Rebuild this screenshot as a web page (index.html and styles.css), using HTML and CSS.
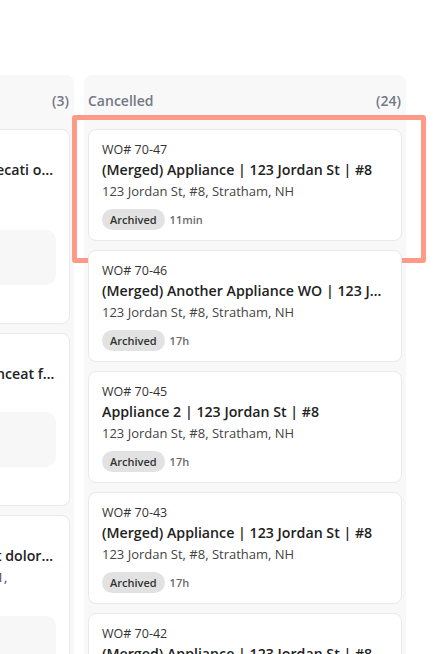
FILE: index.html
```html
<!DOCTYPE html>
<html lang="en">
<head>
<meta charset="utf-8">
<title>Work orders</title>
<link rel="stylesheet" href="styles.css">
</head>
<body>
<div class="board">
  <section class="column">
    <header class="col-head"><span class="col-name">Completed</span><span class="col-count">(3)</span></header>
    <article class="card">
      <div class="wo">WO# 70-12</div>
      <div class="title">Nam libero et excepturi sint occaecati omnis</div>
      <div class="addr">77 Lorem Ipsum Street, Suite 300, Northwoodsborough, NH</div>
      <div class="preview"></div>
      <div class="meta"><span class="badge">Completed</span><span class="time">2d</span></div>
    </article>
    <article class="card">
      <div class="wo">WO# 70-09</div>
      <div class="title">Quis autem vel eum irure quis conceat fugiat</div>
      <div class="addr">12 Oak Ave, #3, Exeter, NH</div>
      <div class="preview"></div>
      <div class="meta"><span class="badge">Completed</span><span class="time">3d</span></div>
    </article>
    <article class="card">
      <div class="wo">WO# 70-03</div>
      <div class="title">Sed ut perspiciatis unde omnes et doloremque laudantium</div>
      <div class="addr">4560 Lorem Ipsum Boulevard, Suite 21, Concord, NH</div>
      <div class="preview"></div>
      <div class="meta"><span class="badge">Completed</span><span class="time">5d</span></div>
    </article>
  </section>
  <section class="column">
    <header class="col-head"><span class="col-name">Cancelled</span><span class="col-count">(24)</span></header>
    <article class="card">
      <div class="wo">WO# 70-47</div>
      <div class="title">(Merged) Appliance | 123 Jordan St | #8</div>
      <div class="addr">123 Jordan St, #8, Stratham, NH</div>
      <div class="meta"><span class="badge">Archived</span><span class="time">11min</span></div>
      <div class="highlight"></div>
    </article>
    <article class="card">
      <div class="wo">WO# 70-46</div>
      <div class="title">(Merged) Another Appliance WO | 123 Jordan St | #8</div>
      <div class="addr">123 Jordan St, #8, Stratham, NH</div>
      <div class="meta"><span class="badge">Archived</span><span class="time">17h</span></div>
    </article>
    <article class="card">
      <div class="wo">WO# 70-45</div>
      <div class="title">Appliance 2 | 123 Jordan St | #8</div>
      <div class="addr">123 Jordan St, #8, Stratham, NH</div>
      <div class="meta"><span class="badge">Archived</span><span class="time">17h</span></div>
    </article>
    <article class="card">
      <div class="wo">WO# 70-43</div>
      <div class="title">(Merged) Appliance | 123 Jordan St | #8</div>
      <div class="addr">123 Jordan St, #8, Stratham, NH</div>
      <div class="meta"><span class="badge">Archived</span><span class="time">17h</span></div>
    </article>
    <article class="card">
      <div class="wo">WO# 70-42</div>
      <div class="title">(Merged) Appliance | 123 Jordan St | #8</div>
      <div class="addr">123 Jordan St, #8, Stratham, NH</div>
      <div class="meta"><span class="badge">Archived</span><span class="time">17h</span></div>
    </article>
  </section>
</div>
</body>
</html>
```
FILE: styles.css
```css
html, body {
  margin: 0;
  background: #ffffff;
}

body {
  font-family: "Open Sans", "Noto Sans", sans-serif;
  color: #222;
  overflow: hidden;
}

.board {
  display: flex;
  align-items: flex-start;
  gap: 10px;
  padding-top: 75px;
  margin-left: -248px;
}

.column {
  flex: 0 0 322px;
  width: 322px;
  min-width: 0;
  box-sizing: border-box;
  background: #f8f8f8;
  border-radius: 8px;
  padding: 0 4px 4px;
  display: flex;
  flex-direction: column;
  gap: 9px;
}

.col-head {
  display: flex;
  justify-content: space-between;
  align-items: center;
  padding: 16px 1px 0 0;
  height: 20px;
  margin-bottom: 9px;
  font-size: 14px;
  font-weight: 600;
  line-height: 20px;
  color: #737987;
}

.card {
  position: relative;
  min-width: 0;
  background: #ffffff;
  border: 1px solid #e9e9e9;
  border-radius: 8px;
  padding: 10px 13px 10px;
}

.wo {
  font-size: 12.5px;
  line-height: 19px;
  color: #333;
}

.title {
  font-size: 14.2px;
  font-weight: 600;
  line-height: 21px;
  color: #222;
  white-space: nowrap;
  overflow: hidden;
  text-overflow: ellipsis;
}

.addr {
  font-size: 13px;
  line-height: 22px;
  color: #444;
}

.preview {
  margin-top: 6px;
  height: 55px;
  background: #f7f7f7;
  border-radius: 10px;
}

.meta {
  display: flex;
  align-items: center;
  gap: 5px;
  margin-top: 7px;
}

.badge {
  height: 21px;
  padding: 0 8px;
  border-radius: 11px;
  background: #e2e2e2;
  font-size: 11px;
  font-weight: 600;
  line-height: 21px;
  color: #333;
}

.time {
  font-size: 11px;
  font-weight: 600;
  color: #6b6b6b;
}

.highlight {
  position: absolute;
  left: -17px;
  top: -15px;
  right: -25px;
  bottom: -23px;
  border: 5px solid #ff9a89;
  border-radius: 3px;
  pointer-events: none;
}
```
